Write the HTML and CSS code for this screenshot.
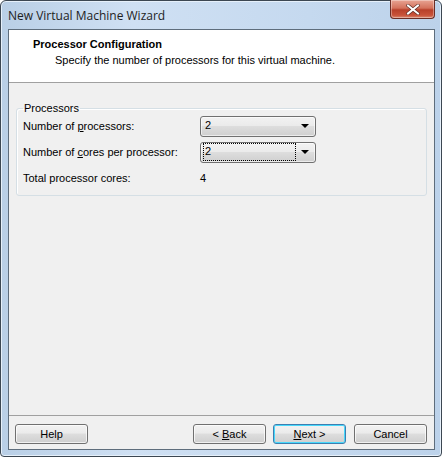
FILE: index.html
```html
<!DOCTYPE html>
<html>
<head>
<meta charset="utf-8">
<link rel="stylesheet" href="styles.css">
</head>
<body>
<div class="window">
  <div class="titlebar">
    <span class="title">New Virtual Machine Wizard</span>
    <div class="close">
      <svg width="14" height="11" viewBox="0 0 14 11"><path d="M2 1.5 L12 9.5 M12 1.5 L2 9.5" stroke="#5a2a22" stroke-width="3.4" stroke-linecap="square"/><path d="M2 1.5 L12 9.5 M12 1.5 L2 9.5" stroke="#fff" stroke-width="2" stroke-linecap="square"/></svg>
    </div>
  </div>
  <div class="client">
    <div class="header">
      <div class="h-title">Processor Configuration</div>
      <div class="h-sub">Specify the number of processors for this virtual machine.</div>
    </div>
    <div class="body">
      <fieldset class="group">
        <legend>Processors</legend>
        <div class="row">
          <span class="label">Number of <u>p</u>rocessors:</span>
          <div class="combo"><span class="val">2</span><span class="arrow"></span></div>
        </div>
        <div class="row">
          <span class="label">Number of <u>c</u>ores per processor:</span>
          <div class="combo"><span class="val focus">2</span><span class="arrow"></span></div>
        </div>
        <div class="row total">
          <span class="label">Total processor cores:</span>
          <span class="count">4</span>
        </div>
      </fieldset>
    </div>
    <div class="footer">
      <button class="btn">Help</button>
      <div class="spacer"></div>
      <button class="btn">&lt; <u>B</u>ack</button>
      <button class="btn default"><u>N</u>ext &gt;</button>
      <button class="btn">Cancel</button>
    </div>
  </div>
</div>
</body>
</html>
```

FILE: styles.css
```css
html, body {
  margin: 0;
  padding: 0;
}
body {
  width: 442px;
  height: 457px;
  overflow: hidden;
  font-family: "Liberation Sans", Arial, sans-serif;
  font-size: 11px;
  color: #000;
}
.window {
  box-sizing: border-box;
  width: 442px;
  height: 457px;
  border: 1px solid #3c4752;
  border-radius: 6px 6px 4px 4px;
  background: linear-gradient(90deg, #b9cfe6 0%, #cfe0f3 30%, #c5d9ef 70%, #bcd2ea 100%);
  padding: 0 6px 6px 7px;
  display: flex;
  flex-direction: column;
  box-shadow: inset 0 0 0 1px #e6f0fa;
}
.titlebar {
  height: 28px;
  display: flex;
  align-items: flex-start;
  position: relative;
}
.title {
  font-family: "Open Sans", "Liberation Sans", sans-serif;
  font-size: 12px;
  color: #1e1e1e;
  margin-top: 6px;
  margin-left: 0px;
}
.close {
  position: absolute;
  top: -1px;
  right: 0px;
  width: 45px;
  height: 19px;
  box-sizing: border-box;
  border: 1px solid #6b2d25;
  border-top: none;
  border-radius: 0 0 4px 4px;
  background: linear-gradient(#e8a493 0%, #d4725c 45%, #b8402a 55%, #c9533a 85%, #d98a72 100%);
  display: flex;
  align-items: center;
  justify-content: center;
  box-shadow: inset 0 0 0 1px rgba(255,255,255,0.35);
}
.client {
  flex: 1;
  border: 1px solid #5e6d7c;
  background: #f0f0f0;
  display: flex;
  flex-direction: column;
}
.header {
  background: #fff;
  height: 52px;
  border-bottom: 1px solid #a0a0a0;
  box-sizing: content-box;
  padding: 0 0 0 24px;
}
.h-title {
  font-weight: bold;
  margin-top: 8px;
  line-height: 13px;
}
.h-sub {
  margin-top: 3px;
  margin-left: 22px;
  line-height: 13px;
}
.body {
  flex: 1;
  padding: 19px 7px 0 7px;
}
.group {
  margin: 0;
  border: 1px solid #d5dfe5;
  border-radius: 3px;
  padding: 2px 0 13px 6px;
  height: 94px;
  box-sizing: border-box;
  box-shadow: inset 1px 1px 0 #fff;
}
legend {
  padding: 0 1px;
  margin-left: 0;
  line-height: 12px;
  color: #000;
}
.row {
  display: flex;
  align-items: center;
  height: 20px;
  margin-bottom: 6px;
}
.label {
  width: 177px;
}
.combo {
  box-sizing: border-box;
  width: 116px;
  height: 21px;
  border: 1px solid #707070;
  border-radius: 3px;
  background: linear-gradient(#f2f2f2 0%, #ebebeb 45%, #dddddd 50%, #cfcfcf 100%);
  display: flex;
  align-items: center;
  padding: 2px 3px 2px 3px;
  box-shadow: inset 0 0 0 1px rgba(255,255,255,0.6);
}
.val {
  flex: 0 0 auto;
  line-height: 13px;
  padding-left: 1px;
  width: 90px;
  height: 15px;
  box-sizing: border-box;
}
.val.focus {
  outline: 1px dotted #000;
  outline-offset: 0px;
  border: 0;
  height: 16px;
  width: 91px;
  padding-top: 1px;
}
.arrow {
  margin-left: auto;
  margin-right: 3px;
  width: 0;
  height: 0;
  border-left: 4px solid transparent;
  border-right: 4px solid transparent;
  border-top: 4px solid #000;
}
.total {
  margin-top: 3px;
}
.count {
  color: #000;
}
.footer {
  border-top: 1px solid #a0a0a0;
  height: 34px;
  display: flex;
  align-items: flex-start;
  padding: 8px 7px 0 6px;
  box-sizing: border-box;
  gap: 8px;
}
.spacer {
  flex: 1;
}
.btn {
  font-family: "Liberation Sans", Arial, sans-serif;
  font-size: 11px;
  width: 73px;
  height: 20px;
  box-sizing: border-box;
  border: 1px solid #707070;
  border-radius: 3px;
  background: linear-gradient(#f2f2f2 0%, #ebebeb 45%, #dddddd 50%, #cfcfcf 100%);
  box-shadow: inset 0 0 0 1px rgba(255,255,255,0.7);
  padding: 0;
  color: #000;
}
.btn.default {
  border-color: #3c7fb1;
  box-shadow: inset 0 0 0 1px #48d8fb;
  margin-left: -1px;
}
u {
  text-decoration: underline;
}
```
